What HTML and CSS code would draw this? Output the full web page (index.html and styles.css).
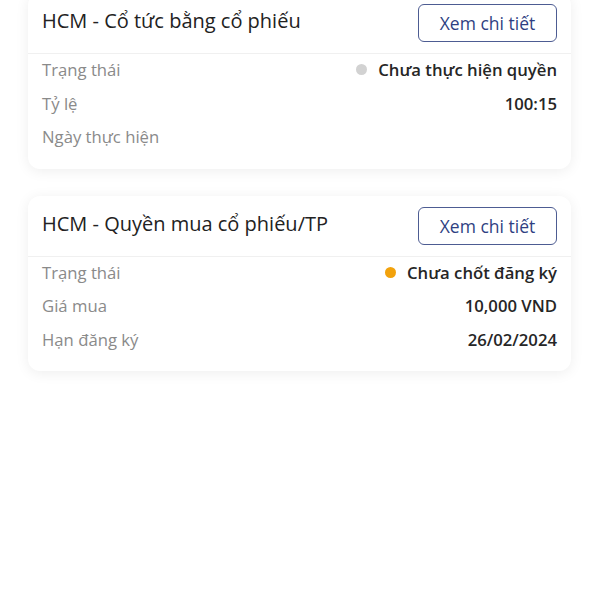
FILE: index.html
```html
<!DOCTYPE html>
<html lang="vi">
<head>
  <meta charset="UTF-8" />
  <meta name="viewport" content="width=device-width, initial-scale=1.0">
  <title>Quyền cổ đông</title>
  <link rel="stylesheet" href="styles.css">
</head>
<body>

<div class="list">
  <div class="card">
    <div class="card-head">
      <div class="title">HCM - Cổ tức bằng cổ phiếu</div>
      <button class="btn">Xem chi tiết</button>
    </div>
    <div class="rows">
      <div class="row">
        <span class="label">Trạng thái</span>
        <span class="value"><i class="dot gray"></i>Chưa thực hiện quyền</span>
      </div>
      <div class="row">
        <span class="label">Tỷ lệ</span>
        <span class="value">100:15</span>
      </div>
      <div class="row">
        <span class="label">Ngày thực hiện</span>
        <span class="value"></span>
      </div>
    </div>
  </div>

  <div class="card">
    <div class="card-head">
      <div class="title">HCM - Quyền mua cổ phiếu/TP</div>
      <button class="btn">Xem chi tiết</button>
    </div>
    <div class="rows">
      <div class="row">
        <span class="label">Trạng thái</span>
        <span class="value"><i class="dot orange"></i>Chưa chốt đăng ký</span>
      </div>
      <div class="row">
        <span class="label">Giá mua</span>
        <span class="value">10,000 VND</span>
      </div>
      <div class="row">
        <span class="label">Hạn đăng ký</span>
        <span class="value">26/02/2024</span>
      </div>
    </div>
  </div>
</div>

</body>
</html>
```

FILE: styles.css
```css
* { margin: 0; padding: 0; box-sizing: border-box; }
html, body {
  height: 100%;
  background: #fff;
  font-family: "Open Sans", "Noto Sans", sans-serif;
  color: #222;
}

.list {
  display: flex;
  flex-direction: column;
  gap: 27px;
  padding: 0 29px 0 28px;
  margin-top: -7px;
}

.card {
  background: #fff;
  border-radius: 12px;
  box-shadow: 0 2px 14px rgba(0, 0, 0, 0.07);
  padding-bottom: 15px;
}

.card-head {
  display: flex;
  justify-content: space-between;
  align-items: flex-start;
  padding: 11px 14px 11px 14px;
  border-bottom: 1px solid #f0f0f0;
}

.title {
  font-size: 20px;
  font-weight: 500;
  line-height: 26px;
  padding-top: 4px;
  color: #222;
}

.btn {
  width: 139px;
  height: 38px;
  border: 1.5px solid #4d5c92;
  border-radius: 6px;
  background: #fff;
  color: #2f3f82;
  font-family: inherit;
  font-size: 17.5px;
  font-weight: 500;
}

.rows {
  padding: 0 14px;
  margin-top: -1px;
}

.row {
  display: flex;
  justify-content: space-between;
  align-items: center;
  height: 33.5px;
  font-size: 16.7px;
}

.label {
  color: #8a8a8a;
}

.value {
  display: flex;
  align-items: center;
  font-weight: 600;
  color: #262626;
}

.dot {
  width: 11px;
  height: 11px;
  border-radius: 50%;
  margin-right: 11px;
}
.dot.gray { background: #d2d2d2; }
.dot.orange { background: #f2a20c; }
```
